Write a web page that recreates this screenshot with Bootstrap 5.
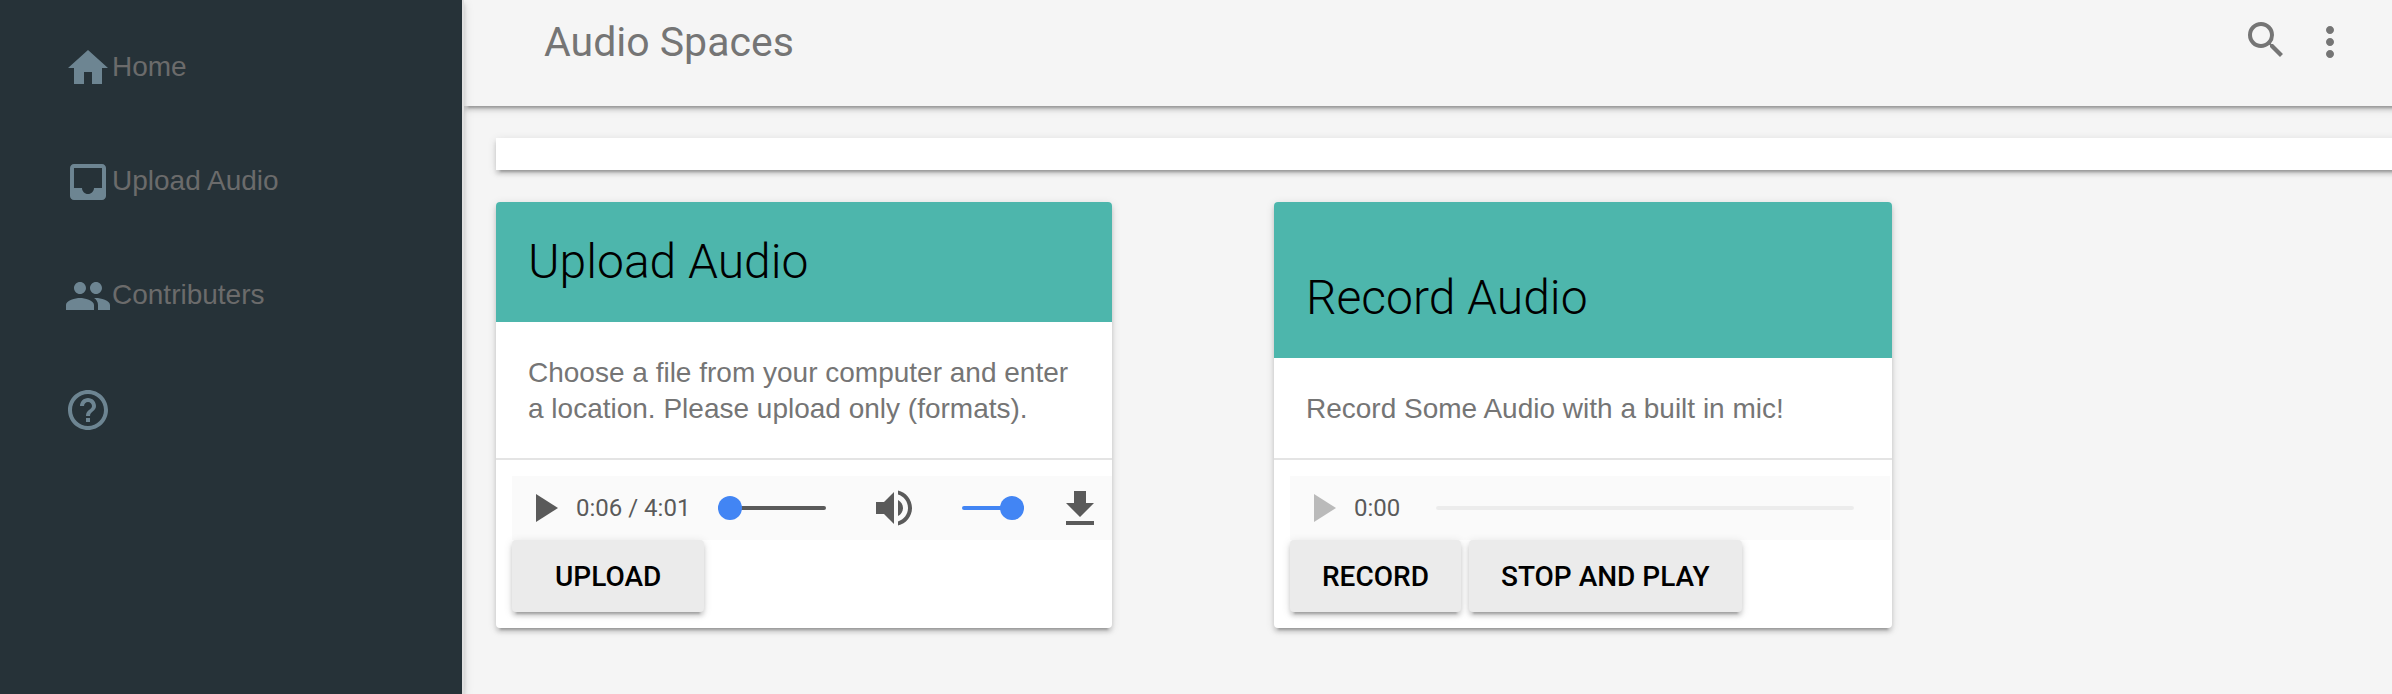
<!DOCTYPE html>
<html lang="en">
<head>
<meta charset="utf-8">
<meta name="viewport" content="width=device-width, initial-scale=1">
<title>Audio Spaces</title>
<link href="https://cdn.jsdelivr.net/npm/bootstrap@5.3.0/dist/css/bootstrap.min.css" rel="stylesheet">
<style>
  :root { --raise: 0 4px 4px rgba(0,0,0,.14), 0 6px 2px -4px rgba(0,0,0,.2), 0 2px 10px rgba(0,0,0,.12); }
  body { background: #f5f5f5; color: #757575; font-family: "Liberation Sans", Arial, sans-serif; font-size: 28px; line-height: 36px; }
  svg { width: 48px; height: 48px; fill: currentColor; display: block; flex: none; }
  .side { flex: 0 0 464px; background: #263238; border-right: 2px solid #e0e0e0; padding: 44px 32px 44px 64px; gap: 66px; box-shadow: var(--raise); z-index: 2; }
  .side a { color: #6b6b6b; line-height: 46px; height: 48px; }
  .side svg { color: #6d8592; }
  .page { overflow-x: hidden; }
  .topbar { height: 106px; margin-right: -32px; padding: 16px 70px 0 80px; background: #f5f5f5; box-shadow: var(--raise); }
  .topbar h1 { font: 400 41px/52px Roboto, sans-serif; }
  .plain { border: 0; padding: 0; background: none; color: inherit; }
  .plain:disabled { color: #bababa; }
  .more { padding-top: 2px; }
  .content { padding: 32px 0 32px 32px; gap: 32px; }
  .strip { height: 32px; margin-right: -32px; background: #fff; box-shadow: var(--raise); }
  .tiles { display: grid; grid-template-columns: 616fr 618fr; column-gap: 162px; margin-right: 500px; }
  .tile { border: 0; border-radius: 4px; box-shadow: var(--raise); }
  .tile-head { background: #4db6ac; color: #000; padding: 32px; border-radius: 4px 4px 0 0; }
  .tile-head h2 { font: 300 48px/56px Roboto, sans-serif; }
  .tile-text { padding: 33px 32px 31px; }
  .tile-actions { border-top: 2px solid #e4e4e4; padding: 16px 0 16px 16px; }
  .player { max-width: 600px; height: 64px; padding: 0 8px; background: #fafafa; color: #5a5a5a; font: 400 24px/32px Roboto, sans-serif; }
  .time { margin-left: 8px; white-space: nowrap; }
  .seek { margin: 0 44px 0 28px; }
  .seek-empty { margin: 0 28px 0 36px; }
  .slider { appearance: none; -webkit-appearance: none; flex: 1 1 0; min-width: 0; height: 24px; background: none; padding: 0; }
  .slider::-webkit-slider-runnable-track { height: 4px; border-radius: 2px; background: #5a5a5a; }
  .slider::-webkit-slider-thumb { -webkit-appearance: none; width: 24px; height: 24px; margin-top: -10px; border-radius: 50%; background: #4285f4; }
  .slider:disabled::-webkit-slider-runnable-track { background: #ececec; }
  .slider:disabled::-webkit-slider-thumb { visibility: hidden; }
  .volume { flex: 0 0 62px; margin: 0 32px 0 44px; }
  .volume::-webkit-slider-runnable-track { background: #4285f4; }
  .raised { --bs-btn-bg: #ebebeb; --bs-btn-hover-bg: #e0e0e0; height: 72px; padding: 2px 32px 0; border: 0; border-radius: 4px; color: #000; font: 500 28px/36px Roboto, sans-serif; text-transform: uppercase; box-shadow: var(--raise); }
  .raised-wide { padding: 2px 43px 0; }
</style>
</head>
<body>
<div class="d-flex min-vh-100">
  <nav class="side d-flex flex-column" aria-label="Main">
    <a class="d-flex text-decoration-none" href="#home"><svg viewBox="0 0 24 24" aria-hidden="true"><path d="M10 20v-6h4v6h5v-8h3L12 3 2 12h3v8z"/></svg>Home</a>
    <a class="d-flex text-decoration-none" href="#upload"><svg viewBox="0 0 24 24" aria-hidden="true"><path d="M19 3H4.99c-1.11 0-1.98.89-1.98 2L3 19c0 1.1.88 2 1.99 2H19c1.1 0 2-.9 2-2V5c0-1.11-.9-2-2-2zm0 12h-4c0 1.66-1.35 3-3 3s-3-1.34-3-3H4.99V5H19v10z"/></svg>Upload Audio</a>
    <a class="d-flex text-decoration-none" href="#contributers"><svg viewBox="0 0 24 24" aria-hidden="true"><path d="M16 11c1.66 0 2.99-1.34 2.99-3S17.66 5 16 5c-1.66 0-3 1.34-3 3s1.34 3 3 3zm-8 0c1.66 0 2.99-1.34 2.99-3S9.66 5 8 5C6.34 5 5 6.34 5 8s1.34 3 3 3zm0 2c-2.33 0-7 1.17-7 3.5V19h14v-2.5c0-2.33-4.67-3.5-7-3.5zm8 0c-.29 0-.62.02-.97.05 1.16.84 1.97 1.97 1.97 3.45V19h6v-2.5c0-2.33-4.67-3.5-7-3.5z"/></svg>Contributers</a>
    <a class="d-flex text-decoration-none" href="#help" aria-label="Help"><svg viewBox="0 0 24 24" aria-hidden="true"><path d="M11 18h2v-2h-2v2zm1-16C6.48 2 2 6.48 2 12s4.48 10 10 10 10-4.48 10-10S17.52 2 12 2zm0 18c-4.41 0-8-3.59-8-8s3.59-8 8-8 8 3.59 8 8-3.59 8-8 8zm0-14c-2.21 0-4 1.79-4 4h2c0-1.1.9-2 2-2s2 .9 2 2c0 2-3 1.75-3 5h2c0-2.25 3-2.5 3-5 0-2.21-1.79-4-4-4z"/></svg></a>
  </nav>
  <div class="page flex-grow-1">
    <header class="topbar d-flex align-items-start gap-3">
      <h1 class="m-0 me-auto">Audio Spaces</h1>
      <button class="plain" type="button" aria-label="Search"><svg viewBox="0 0 24 24"><path d="M15.5 14h-.79l-.28-.27A6.471 6.471 0 0 0 16 9.5 6.5 6.5 0 1 0 9.5 16c1.61 0 3.09-.59 4.23-1.57l.27.28v.79l5 4.99L20.49 19l-4.99-5zm-6 0C7.01 14 5 11.99 5 9.5S7.01 5 9.5 5 14 7.01 14 9.5 11.99 14 9.5 14z"/></svg></button>
      <button class="plain more" type="button" aria-label="More"><svg viewBox="0 0 24 24"><path d="M12 8c1.1 0 2-.9 2-2s-.9-2-2-2-2 .9-2 2 .9 2 2 2zm0 2c-1.1 0-2 .9-2 2s.9 2 2 2 2-.9 2-2-.9-2-2-2zm0 6c-1.1 0-2 .9-2 2s.9 2 2 2 2-.9 2-2-.9-2-2-2z"/></svg></button>
    </header>
    <main class="content d-flex flex-column">
      <div class="strip"></div>
      <div class="tiles">
        <section class="tile card">
          <div class="tile-head flex-grow-1 d-flex align-items-end"><h2 class="m-0">Upload Audio</h2></div>
          <p class="tile-text m-0">Choose a file from your computer and enter a location. Please upload only (formats).</p>
          <div class="tile-actions">
            <div class="player d-flex align-items-center">
              <button class="plain" type="button" aria-label="Play"><svg viewBox="0 0 24 24"><path d="M8 5v14l11-7z"/></svg></button>
              <span class="time">0:06 / 4:01</span>
              <input class="slider seek" type="range" min="0" max="241" value="0" aria-label="Position">
              <button class="plain" type="button" aria-label="Mute"><svg viewBox="0 0 24 24"><path d="M3 9v6h4l5 5V4L7 9H3zm13.500 3c0-1.770-1.020-3.290-2.500-4.030v8.050c1.480-.730 2.500-2.250 2.500-4.020zM14 3.230v2.060c2.890.860 5 3.540 5 6.710s-2.110 5.850-5 6.710v2.060c4.010-.910 7-4.490 7-8.770s-2.990-7.860-7-8.770z"/></svg></button>
              <input class="slider volume" type="range" min="0" max="100" value="100" aria-label="Volume">
              <button class="plain" type="button" aria-label="Download"><svg viewBox="0 0 24 24"><path d="M19 9.500h-4v-6H9v6H5l7 7 7-7zM5 18.500v2h14v-2H5z"/></svg></button>
            </div>
            <div class="d-flex"><button class="btn raised raised-wide" type="button">Upload</button></div>
          </div>
        </section>
        <section class="tile card">
          <div class="tile-head flex-grow-1 d-flex align-items-end"><h2 class="m-0">Record Audio</h2></div>
          <p class="tile-text m-0">Record Some Audio with a built in mic!</p>
          <div class="tile-actions">
            <div class="player d-flex align-items-center">
              <button class="plain" type="button" aria-label="Play" disabled><svg viewBox="0 0 24 24"><path d="M8 5v14l11-7z"/></svg></button>
              <span class="time">0:00</span>
              <input class="slider seek-empty" type="range" min="0" max="100" value="0" aria-label="Position" disabled>
            </div>
            <div class="d-flex gap-2"><button class="btn raised" type="button">Record</button><button class="btn raised" type="button">Stop and play</button></div>
          </div>
        </section>
      </div>
    </main>
  </div>
</div>
<script src="https://cdn.jsdelivr.net/npm/bootstrap@5.3.0/dist/js/bootstrap.bundle.min.js"></script>
</body>
</html>
